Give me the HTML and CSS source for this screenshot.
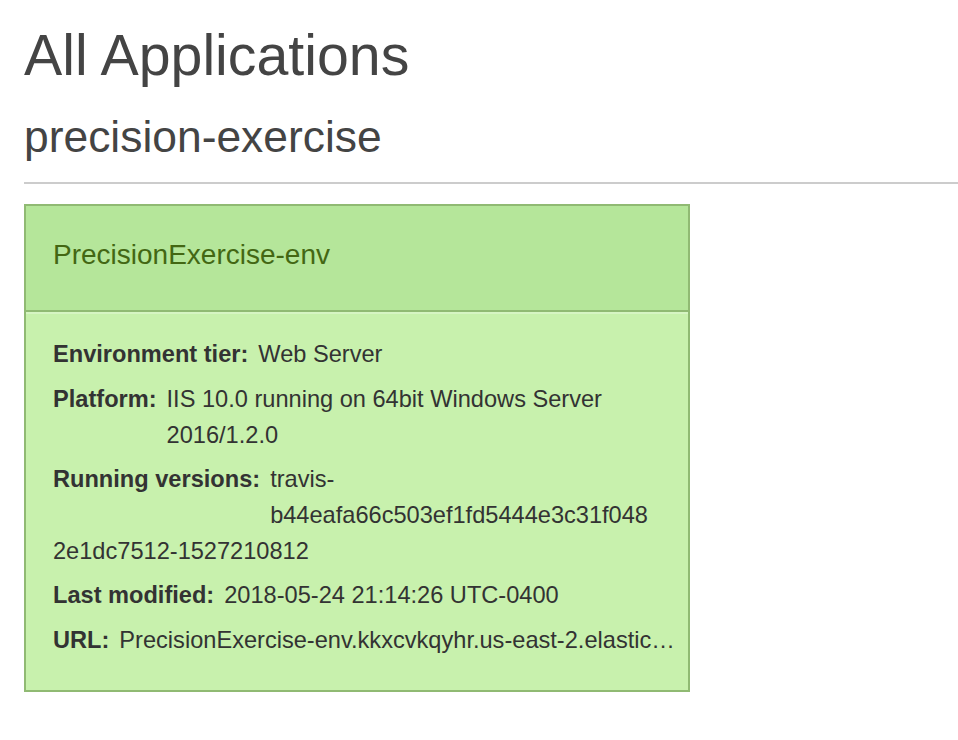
FILE: index.html
```html
<!DOCTYPE html>
<html lang="en">
<head>
<meta charset="utf-8">
<title>All Applications</title>
<link rel="stylesheet" href="styles.css">
</head>
<body>
<main class="page">
  <h1 class="page-title">All Applications</h1>
  <h2 class="app-name">precision-exercise</h2>
  <hr class="divider">
  <section class="env-panel">
    <header class="env-heading">
      <h3 class="env-title">PrecisionExercise-env</h3>
    </header>
    <div class="env-body">
      <div class="env-row">
        <span class="env-label">Environment tier:</span>
        <span class="env-value">Web Server</span>
      </div>
      <div class="env-row">
        <span class="env-label">Platform:</span>
        <span class="env-value">IIS 10.0 running on 64bit Windows Server 2016/1.2.0</span>
      </div>
      <div class="env-row">
        <span class="env-label">Running versions:</span>
        <span class="env-value env-hash">travis-b44eafa66c503ef1fd5444e3c31f0482e1dc7512-1527210812</span>
      </div>
      <div class="env-row">
        <span class="env-label">Last modified:</span>
        <span class="env-value">2018-05-24 21:14:26 UTC-0400</span>
      </div>
      <div class="env-row env-row-url">
        <span class="env-label">URL:</span>
        <span class="env-value env-url">PrecisionExercise-env.kkxcvkqyhr.us-east-2.elasticbeanstalk.com</span>
      </div>
    </div>
  </section>
</main>
</body>
</html>
```
FILE: styles.css
```css
html, body {
  margin: 0;
  padding: 0;
  background: #ffffff;
}

body {
  font-family: "Liberation Sans", Arial, Helvetica, sans-serif;
  color: #333333;
}

.page {
  padding: 23px 0 40px 24px;
}

.page-title {
  margin: 0;
  font-size: 57.3px;
  line-height: 64px;
  font-weight: normal;
  color: #444444;
}

.app-name {
  margin: 26px 0 0 0;
  font-size: 44.4px;
  line-height: 48px;
  font-weight: normal;
  color: #444444;
}

.divider {
  margin: 21px 0 0 0;
  border: 0;
  height: 2px;
  background: #cccccc;
}

.env-panel {
  margin-top: 20px;
  width: 662px;
  border: 2px solid #90ba73;
  background: #c8f1ad;
}

.env-heading {
  background: #b5e69a;
  padding: 33px 28px 39px 27px;
  border-bottom: 2px solid #90ba73;
}

.env-title {
  margin: 0;
  font-size: 28px;
  line-height: 32px;
  font-weight: normal;
  color: #436713;
}

.env-body {
  border-top: 2px solid #d6f5c3;
  padding: 22px 30px 31px 27px;
  font-size: 23.6px;
  line-height: 36px;
}

.env-row {
  display: flow-root;
  margin-bottom: 8px;
}

.env-row:last-child {
  margin-bottom: 0;
}

.env-row-url {
  margin-right: -19px;
}

.env-label {
  float: left;
  font-weight: bold;
  margin-right: 10px;
  margin-bottom: 1px;
}

.env-hash {
  overflow-wrap: anywhere;
}

.env-url {
  display: block;
  overflow: hidden;
  white-space: nowrap;
  text-overflow: ellipsis;
}
```
